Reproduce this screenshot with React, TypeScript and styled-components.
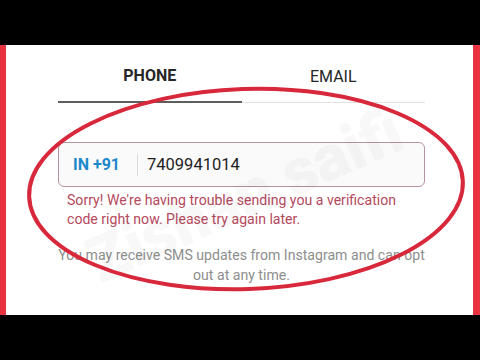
import styled, { createGlobalStyle } from 'styled-components';

const GlobalStyle = createGlobalStyle`
  html, body {
    margin: 0;
    padding: 0;
    background: #000;
  }
  body {
    font-family: Roboto, 'Liberation Sans', sans-serif;
  }
`;

export default function App() {
  return (
    <>
      <GlobalStyle />
      <Page>
        <Frame>
          <Watermark>Zishan saifi</Watermark>
          <Tabs>
            <Tab active>PHONE</Tab>
            <Tab>EMAIL</Tab>
          </Tabs>
          <PhoneField>
            <CountryCode>IN +91</CountryCode>
            <Divider />
            <Number>7409941014</Number>
          </PhoneField>
          <ErrorText>
            Sorry! We're having trouble sending you a verification
            <br />
            code right now. Please try again later.
          </ErrorText>
          <Notice>
            You may receive SMS updates from Instagram and can opt
            <br />
            out at any time.
          </Notice>
          <Circle viewBox='0 0 467 270'>
            <ellipse
              cx='240'
              cy='144'
              rx='217'
              ry='100'
              fill='none'
              stroke='#d8283b'
              strokeWidth='4'
              transform='rotate(-2 240 144)'
            />
          </Circle>
        </Frame>
      </Page>
    </>
  );
}

const Page = styled.div`
  width: 480px;
  height: 360px;
  background: #000;
  padding-top: 45px;
  box-sizing: border-box;
`;

const Frame = styled.div`
  position: relative;
  overflow: hidden;
  height: 270px;
  background: #fff;
  border-left: 6px solid #e8323f;
  border-right: 7px solid #e8323f;
  padding-left: 4px;
  display: flex;
  flex-direction: column;
  align-items: center;
`;

const Tabs = styled.div`
  display: flex;
  width: 367px;
`;

const Tab = styled.div<{ active?: boolean }>`
  flex: 1;
  height: 58px;
  display: flex;
  align-items: center;
  justify-content: center;
  padding-top: 5px;
  box-sizing: border-box;
  font-size: 16px;
  font-weight: ${(p) => (p.active ? 700 : 400)};
  color: #262626;
  border-bottom: ${(p) => (p.active ? '2px solid #5e5e5e' : '1px solid #e2e2e2')};
  margin-bottom: ${(p) => (p.active ? '0' : '1px')};
`;

const PhoneField = styled.div`
  margin-top: 38px;
  width: 367px;
  height: 45px;
  box-sizing: border-box;
  border: 1px solid #b7959a;
  border-radius: 6px;
  background: #fafafa;
  display: flex;
  align-items: center;
  padding-left: 14px;
`;

const CountryCode = styled.span`
  font-size: 16px;
  font-weight: 700;
  color: #1c88cb;
`;

const Divider = styled.span`
  width: 1px;
  height: 22px;
  background: #dcdcdc;
  margin: 0 9px 0 17px;
`;

const Number = styled.span`
  font-size: 16.5px;
  color: #1e1e1e;
`;

const ErrorText = styled.p`
  margin: 4px 0 0;
  width: 367px;
  padding-left: 9px;
  box-sizing: border-box;
  font-size: 14.1px;
  line-height: 19px;
  color: #b54a5d;
`;

const Notice = styled.p`
  margin: 16px 0 0;
  width: 380px;
  text-align: center;
  font-size: 14.1px;
  line-height: 20px;
  color: #8e8e8e;
`;

const Watermark = styled.div`
  position: absolute;
  left: 70px;
  top: 185px;
  font-size: 64px;
  font-weight: 900;
  color: #000;
  opacity: 0.025;
  transform: rotate(-24deg);
  transform-origin: left top;
  white-space: nowrap;
  pointer-events: none;
`;

const Circle = styled.svg`
  position: absolute;
  left: 0;
  top: 0;
  width: 467px;
  height: 270px;
  pointer-events: none;
`;
